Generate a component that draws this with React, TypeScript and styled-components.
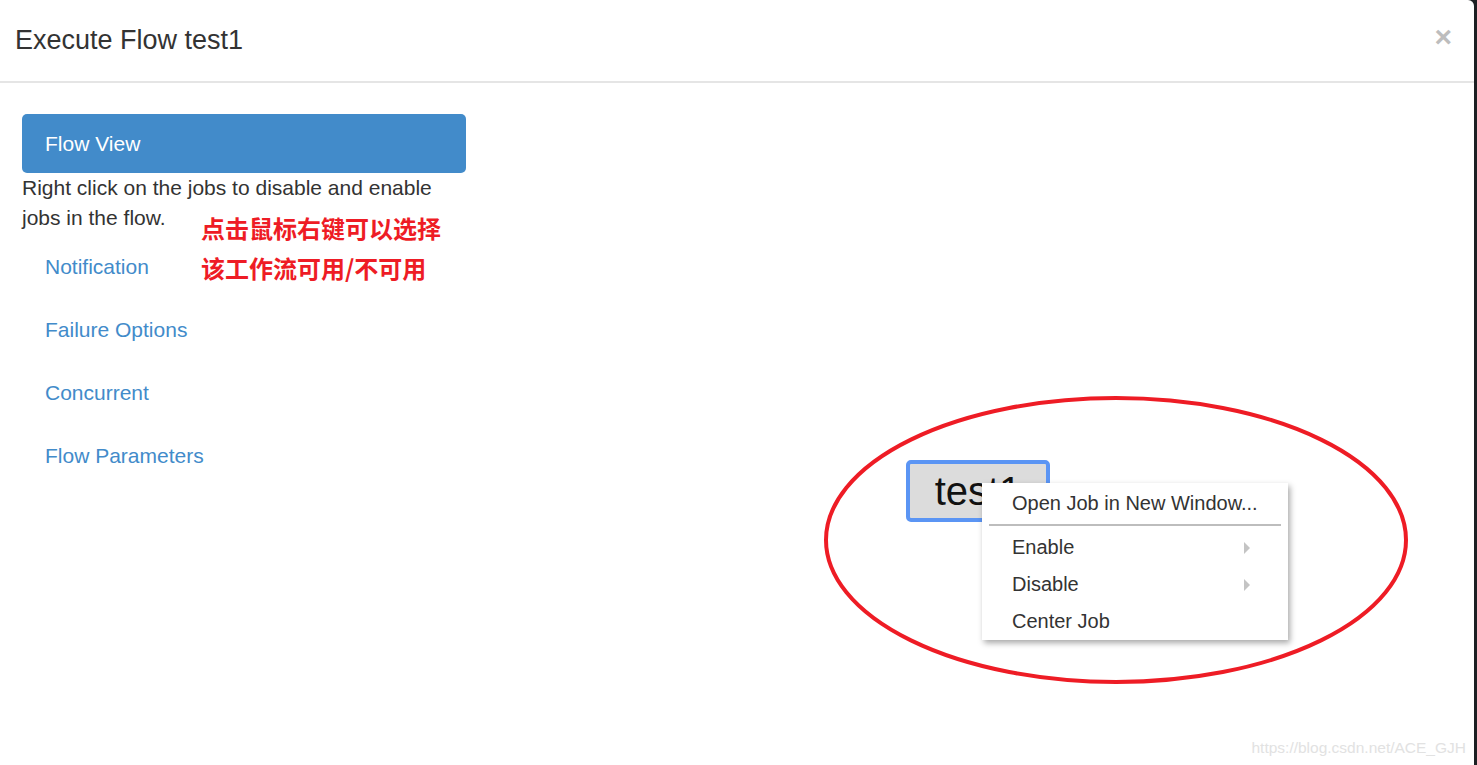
import styled, { createGlobalStyle } from 'styled-components'

const GlobalStyle = createGlobalStyle`
	html, body {
		margin: 0;
		padding: 0;
		height: 100%;
		overflow: hidden;
		background: #1d2023;
	}
	#root {
		height: 100%;
	}
	* {
		box-sizing: border-box;
	}
`

const Modal = styled.div`
	width: 1474px;
	height: 765px;
	background: #fff;
	border-radius: 0 6px 0 0;
	font-family: 'Liberation Sans', Arial, sans-serif;
	color: #333;
	display: flex;
	flex-direction: column;
	position: relative;
	overflow: hidden;
`

const Header = styled.div`
	height: 83px;
	flex: none;
	border-bottom: 2px solid #e5e5e5;
	display: flex;
	align-items: center;
	justify-content: space-between;
	padding: 0 22px 0 15px;
	h4 {
		margin: 0;
		font-size: 27px;
		font-weight: 400;
		color: #333;
	}
`

const Close = styled.button`
	border: none;
	background: transparent;
	font-family: 'Liberation Sans', Arial, sans-serif;
	font-size: 30px;
	font-weight: 700;
	color: #bdbdbd;
	padding: 0 0 8px;
	line-height: 1;
	cursor: pointer;
`

const Body = styled.div`
	flex: 1;
	display: flex;
	padding: 31px 0 0 22px;
	position: relative;
`

const Sidebar = styled.div`
	width: 444px;
	flex: none;
	display: flex;
	flex-direction: column;
	align-items: stretch;
`

const Pill = styled.a<{ $active?: boolean }>`
	display: block;
	font-size: 21px;
	text-decoration: none;
	padding: 0 23px;
	border-radius: 5px;
	height: ${(p) => (p.$active ? '59px' : '63px')};
	line-height: ${(p) => (p.$active ? '59px' : '63px')};
	color: ${(p) => (p.$active ? '#fff' : '#428bca')};
	background: ${(p) => (p.$active ? '#428bca' : 'transparent')};
`

const Help = styled.p`
	margin: 0 0 2px;
	font-size: 21px;
	line-height: 30px;
	color: #333;
`

const Note = styled.div`
	position: absolute;
	left: 201px;
	top: 125px;
	font-family: 'Noto Sans CJK SC', 'Noto Sans', sans-serif;
	font-weight: 700;
	font-size: 24px;
	line-height: 40px;
	color: #ee1c25;
	pointer-events: none;
`

const Canvas = styled.div`
	flex: 1;
	position: relative;
`

const JobNode = styled.div`
	position: absolute;
	left: 440px;
	top: 346px;
	width: 144px;
	height: 62px;
	border: 4px solid #5b95f4;
	border-radius: 5px;
	background: #dcdcdc;
	font-family: 'Liberation Sans', Arial, sans-serif;
	font-size: 40px;
	color: #111;
	text-align: center;
	line-height: 54px;
`

const Menu = styled.ul`
	position: absolute;
	left: 516px;
	top: 369px;
	width: 306px;
	margin: 0;
	padding: 2px 0 0;
	list-style: none;
	background: #fff;
	box-shadow: 2px 3px 6px rgba(0, 0, 0, 0.35);
	font-size: 20px;
	color: #333;
`

const MenuItem = styled.li`
	height: 37px;
	line-height: 37px;
	padding: 0 38px 0 30px;
	display: flex;
	justify-content: space-between;
	align-items: center;
	white-space: nowrap;
`

const Caret = styled.span`
	width: 0;
	height: 0;
	border-top: 6px solid transparent;
	border-bottom: 6px solid transparent;
	border-left: 6px solid #c4c4c4;
`

const Separator = styled.li`
	height: 2px;
	background: #bdbdbd;
	margin: 2px 7px 3px;
`

const Ring = styled.svg`
	position: absolute;
	left: 0;
	top: 0;
	pointer-events: none;
`

const Watermark = styled.div`
	position: absolute;
	right: 8px;
	bottom: 8px;
	font-size: 15.5px;
	color: #e2e2e2;
`

export default function App() {
	return (
		<>
			<GlobalStyle />
			<Modal>
				<Header>
					<h4>Execute Flow test1</h4>
					<Close>×</Close>
				</Header>
				<Body>
					<Sidebar>
						<Pill $active>Flow View</Pill>
						<Help>Right click on the jobs to disable and enable jobs in the flow.</Help>
						<Pill>Notification</Pill>
						<Pill>Failure Options</Pill>
						<Pill>Concurrent</Pill>
						<Pill>Flow Parameters</Pill>
					</Sidebar>
					<Canvas>
						<JobNode>test1</JobNode>
						<Menu>
							<MenuItem>Open Job in New Window...</MenuItem>
							<Separator />
							<MenuItem>
								Enable <Caret />
							</MenuItem>
							<MenuItem>
								Disable <Caret />
							</MenuItem>
							<MenuItem>Center Job</MenuItem>
						</Menu>
					</Canvas>
					<Note>
						点击鼠标右键可以选择
						<br />
						该工作流可用/不可用
					</Note>
				</Body>
				<Ring width="1474" height="765">
					<ellipse cx="1116" cy="540" rx="290" ry="142" fill="none" stroke="#ee1c25" strokeWidth="4" />
				</Ring>
				<Watermark>https://blog.csdn.net/ACE_GJH</Watermark>
			</Modal>
		</>
	)
}
